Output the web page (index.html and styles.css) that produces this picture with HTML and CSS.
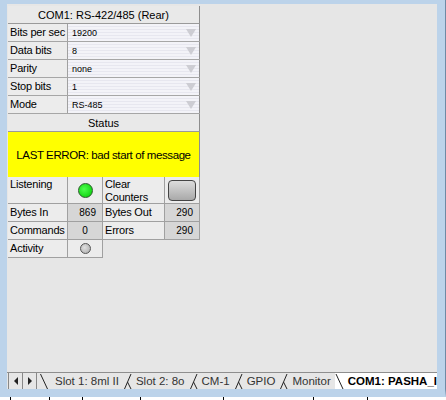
FILE: index.html
```html
<!DOCTYPE html>
<html lang="en">
<head>
  <meta charset="UTF-8">
  <title>COM1 Settings</title>
  <link rel="stylesheet" href="styles.css">
</head>
<body>
  <div class="frame">
    <div class="workspace">
      <div class="panel">
        <div class="title">COM1: RS-422/485 (Rear)</div>

        <div class="row">
          <div class="label">Bits per sec</div>
          <div class="select">19200<span class="arrow"></span></div>
        </div>
        <div class="row">
          <div class="label">Data bits</div>
          <div class="select">8<span class="arrow"></span></div>
        </div>
        <div class="row">
          <div class="label">Parity</div>
          <div class="select">none<span class="arrow"></span></div>
        </div>
        <div class="row">
          <div class="label">Stop bits</div>
          <div class="select">1<span class="arrow"></span></div>
        </div>
        <div class="row">
          <div class="label">Mode</div>
          <div class="select">RS-485<span class="arrow"></span></div>
        </div>

        <div class="title">Status</div>
        <div class="error">LAST ERROR: bad start of message</div>

        <div class="grid">
          <div class="cell tall">Listening</div>
          <div class="cell tall center"><span class="led on"></span></div>
          <div class="cell tall">Clear<br>Counters</div>
          <div class="cell tall center"><span class="btn"></span></div>

          <div class="cell">Bytes In</div>
          <div class="cell num">869</div>
          <div class="cell">Bytes Out</div>
          <div class="cell num">290</div>

          <div class="cell">Commands</div>
          <div class="cell num mid">0</div>
          <div class="cell">Errors</div>
          <div class="cell num">290</div>

          <div class="cell">Activity</div>
          <div class="cell center"><span class="led off"></span></div>
        </div>
      </div>
    </div>

    <div class="tabbar">
      <div class="nav"><span class="tri left"></span></div>
      <div class="nav"><span class="tri right"></span></div>
      <svg class="sep" width="12" height="16" viewBox="0 0 12 16"><path d="M3.5 1 L10.5 16" /></svg>
      <div class="tab first">Slot 1: 8ml II</div>
      <svg class="sep" width="9" height="16" viewBox="0 0 9 16"><path d="M1.5 16 L8 1 M4.5 9 L8 16" /></svg>
      <div class="tab">Slot 2: 8o</div>
      <svg class="sep" width="9" height="16" viewBox="0 0 9 16"><path d="M1.5 16 L8 1 M4.5 9 L8 16" /></svg>
      <div class="tab">CM-1</div>
      <svg class="sep" width="9" height="16" viewBox="0 0 9 16"><path d="M1.5 16 L8 1 M4.5 9 L8 16" /></svg>
      <div class="tab">GPIO</div>
      <svg class="sep" width="9" height="16" viewBox="0 0 9 16"><path d="M1.5 16 L8 1 M4.5 9 L8 16" /></svg>
      <div class="tab">Monitor</div>
      <div class="tab active">
        <svg class="sep" width="9" height="16" viewBox="0 0 9 16"><path d="M1 1 L8 16" /></svg>
        <span>COM1: PASHA_I</span>
      </div>
    </div>
  </div>
  <div class="strip">
    <span></span><span></span><span></span><span></span><span></span><span></span><span></span>
  </div>
</body>
</html>
```

FILE: styles.css
```css
body {
  margin: 0;
  background: #fff;
  font-family: "Liberation Sans", Arial, sans-serif;
  font-size: 11px;
  color: #000;
}
.frame {
  box-sizing: border-box;
  height: 397px;
  background: #bcd3ea;
  padding: 4px 8px 0 7px;
  border-right: 1px solid #6f8aa5;
  border-bottom: 8px solid #bcd3ea;
  display: flex;
  flex-direction: column;
}
.workspace {
  flex: 1;
  background: #e6e6e6;
  padding: 2px 0 0 1px;
}
.panel {
  width: 192px;
  white-space: nowrap;
}
.title {
  box-sizing: border-box;
  height: 18px;
  line-height: 18px;
  text-align: center;
  background: #e9e9e9;
  border-right: 1px solid #8d8d8d;
  border-bottom: 1px solid #9a9a9a;
}
.row {
  display: flex;
  height: 17px;
  border-bottom: 1px solid #a6a6a6;
}
.label {
  box-sizing: border-box;
  width: 60px;
  padding-left: 2px;
  line-height: 17px;
  background: #ececec;
  border-right: 1px solid #a0a0a0;
  overflow: hidden;
  letter-spacing: -0.2px;
}
.select {
  flex: 1;
  position: relative;
  padding-left: 4px;
  font-size: 9px;
  line-height: 19px;
  background: repeating-linear-gradient(#f3f3f8 0, #f3f3f8 2px, #e7e7ef 2px, #e7e7ef 3px);
  border-right: 1px solid #8d8d8d;
}
.arrow {
  position: absolute;
  right: 3px;
  top: 5px;
  border-left: 5px solid transparent;
  border-right: 5px solid transparent;
  border-top: 8px solid #cdcdd3;
}
.error {
  height: 45px;
  line-height: 46px;
  background: #ffff00;
  text-align: center;
  font-size: 11.5px;
  letter-spacing: -0.4px;
  border-right: 1px solid #8d8d8d;
}
.grid {
  display: grid;
  grid-template-columns: 60px 35px 62px 35px;
}
.cell {
  box-sizing: border-box;
  height: 18px;
  line-height: 17px;
  padding-left: 2px;
  background: #ececec;
  border-right: 1px solid #a0a0a0;
  border-bottom: 1px solid #a0a0a0;
  overflow: hidden;
  letter-spacing: -0.2px;
}
.cell.tall {
  height: 27px;
  line-height: 13px;
  padding-top: 1px;
}
.center,
.cell.tall.center {
  display: flex;
  align-items: center;
  justify-content: center;
  padding: 0;
}
.num {
  background: #d6d6d6;
  text-align: right;
  padding-right: 6px;
  font-size: 10px;
  letter-spacing: 0;
}
.num.mid {
  text-align: center;
  padding: 0;
}
.led {
  display: block;
  box-sizing: border-box;
  border-radius: 50%;
}
.led.on {
  width: 15px;
  height: 15px;
  background: radial-gradient(circle at 40% 40%, #4dff4d, #00c800);
  border: 1px solid #2a5a2a;
}
.led.off {
  width: 11px;
  height: 11px;
  background: radial-gradient(circle at 40% 40%, #e0e0e0, #a8a8a8);
  border: 1px solid #555;
}
.btn {
  display: block;
  box-sizing: border-box;
  width: 28px;
  height: 21px;
  border-radius: 4px;
  border: 1px solid #444;
  background: linear-gradient(#dcdcdc, #a9a9a9);
}
.tabbar {
  height: 16px;
  display: flex;
  align-items: stretch;
  background: #e6e6e6;
  border-top: 1px solid #8e8e8e;
  padding-left: 1px;
  font-size: 11.5px;
  white-space: nowrap;
  overflow: hidden;
}
.nav {
  width: 13px;
  display: flex;
  align-items: center;
  justify-content: center;
  border-right: 1px solid #888;
}
.nav:first-child {
  border-left: 1px solid #888;
}
.tri {
  border-top: 4px solid transparent;
  border-bottom: 4px solid transparent;
}
.tri.left {
  border-right: 4px solid #222;
}
.tri.right {
  border-left: 4px solid #222;
}
.sep {
  flex: none;
  fill: none;
  stroke: #222;
  stroke-width: 1;
}
.tab {
  padding: 0 4px;
  line-height: 16px;
  color: #333;
}
.tab.first {
  padding-left: 6px;
}
.tab.active {
  flex: 1;
  display: flex;
  padding: 0;
  background: #fff;
  font-weight: bold;
  color: #000;
  overflow: hidden;
}
.tab.active span {
  padding-left: 4px;
}
.strip {
  height: 3px;
  display: flex;
}
.strip span {
  border-left: 1px solid #000;
}
.strip span:nth-child(1) { margin-left: 10px; width: 38px; }
.strip span:nth-child(2) { width: 32px; }
.strip span:nth-child(3) { width: 57px; }
.strip span:nth-child(4) { width: 82px; }
.strip span:nth-child(5) { width: 89px; }
.strip span:nth-child(6) { width: 53px; }
.strip span:nth-child(7) { width: 40px; }
```
